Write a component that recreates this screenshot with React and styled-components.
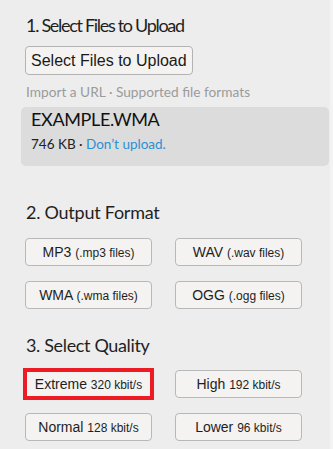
import React from "react";
import styled, { createGlobalStyle, css } from "styled-components";

const GlobalStyle = createGlobalStyle`
  html, body {
    margin: 0;
    background: #f3f3f3;
  }
  * { box-sizing: border-box; }
`;

const formats = [
  { name: "MP3", ext: "(.mp3 files)" },
  { name: "WAV", ext: "(.wav files)" },
  { name: "WMA", ext: "(.wma files)" },
  { name: "OGG", ext: "(.ogg files)" },
];

const qualities = [
  { name: "Extreme", rate: "320 kbit/s", selected: true },
  { name: "High", rate: "192 kbit/s" },
  { name: "Normal", rate: "128 kbit/s" },
  { name: "Lower", rate: "96 kbit/s" },
];

export default function App() {
  return (
    <>
      <GlobalStyle />
      <Page>
        <Heading spacing="-1.3px">1. Select Files to Upload</Heading>
        <UploadButton>Select Files to Upload</UploadButton>
        <Hint>Import a URL · Supported file formats</Hint>
        <FileBox>
          <FileName>EXAMPLE.WMA</FileName>
          <FileMeta>
            746 KB · <Link>Don’t upload.</Link>
          </FileMeta>
        </FileBox>

        <Heading top="35px" spacing="-0.25px">2. Output Format</Heading>
        <Grid>
          {formats.map((f) => (
            <Option key={f.name}>
              {f.name} <Small>{f.ext}</Small>
            </Option>
          ))}
        </Grid>

        <Heading top="25px" spacing="-0.35px">3. Select Quality</Heading>
        <Grid top="14px">
          {qualities.map((q) => (
            <Option key={q.name} selected={q.selected}>
              {q.name} <Small>{q.rate}</Small>
            </Option>
          ))}
        </Grid>
      </Page>
    </>
  );
}

const Page = styled.div`
  margin-right: 3px;
  min-height: 449px;
  padding: 14px 1px 0 25px;
  background: #ededed;
  font-family: "Lato", "Liberation Sans", sans-serif;
`;

const Heading = styled.h2`
  margin: ${(p) => p.top || "0"} 0 0 1px;
  font-size: 18px;
  line-height: 22px;
  font-weight: 400;
  letter-spacing: ${(p) => p.spacing || "0"};
  color: #1f1f1f;
`;

const UploadButton = styled.button`
  display: block;
  margin-top: 10px;
  height: 29px;
  padding: 0 5px;
  font-family: "Liberation Sans", Arial, sans-serif;
  font-size: 16px;
  color: #1a1a1a;
  background: #f4f3f1;
  border: 1px solid #b3b3b3;
  border-radius: 4px;
`;

const Hint = styled.p`
  margin: 8px 0 0 1px;
  font-size: 13.7px;
  line-height: 18px;
  color: #9b9b9b;
`;

const FileBox = styled.div`
  margin: 6px 0 0 -4px;
  padding: 1px 10px 13px;
  background: #dcdcdc;
  border-radius: 5px;
`;

const FileName = styled.div`
  font-size: 18px;
  line-height: 22px;
  letter-spacing: -0.35px;
  color: #111;
`;

const FileMeta = styled.div`
  margin-top: 5px;
  font-size: 13.5px;
  line-height: 18px;
  color: #222;
`;

const Link = styled.span`
  color: #2b8fd5;
`;

const Grid = styled.div`
  margin-top: ${(p) => p.top || "15px"};
  display: grid;
  grid-template-columns: 127px 127px;
  column-gap: 23px;
  row-gap: 15px;
`;

const Option = styled.button`
  height: 28px;
  padding: 0;
  font-family: "Liberation Sans", Arial, sans-serif;
  font-size: 14px;
  color: #1e1e1e;
  background: #f4f3f1;
  border: 1px solid #b8b8b8;
  border-radius: 4px;
  ${(p) =>
    p.selected &&
    css`
      border-radius: 0;
      outline: 4px solid #ed1c24;
      outline-offset: -2px;
    `}
`;

const Small = styled.span`
  font-size: 12px;
`;
